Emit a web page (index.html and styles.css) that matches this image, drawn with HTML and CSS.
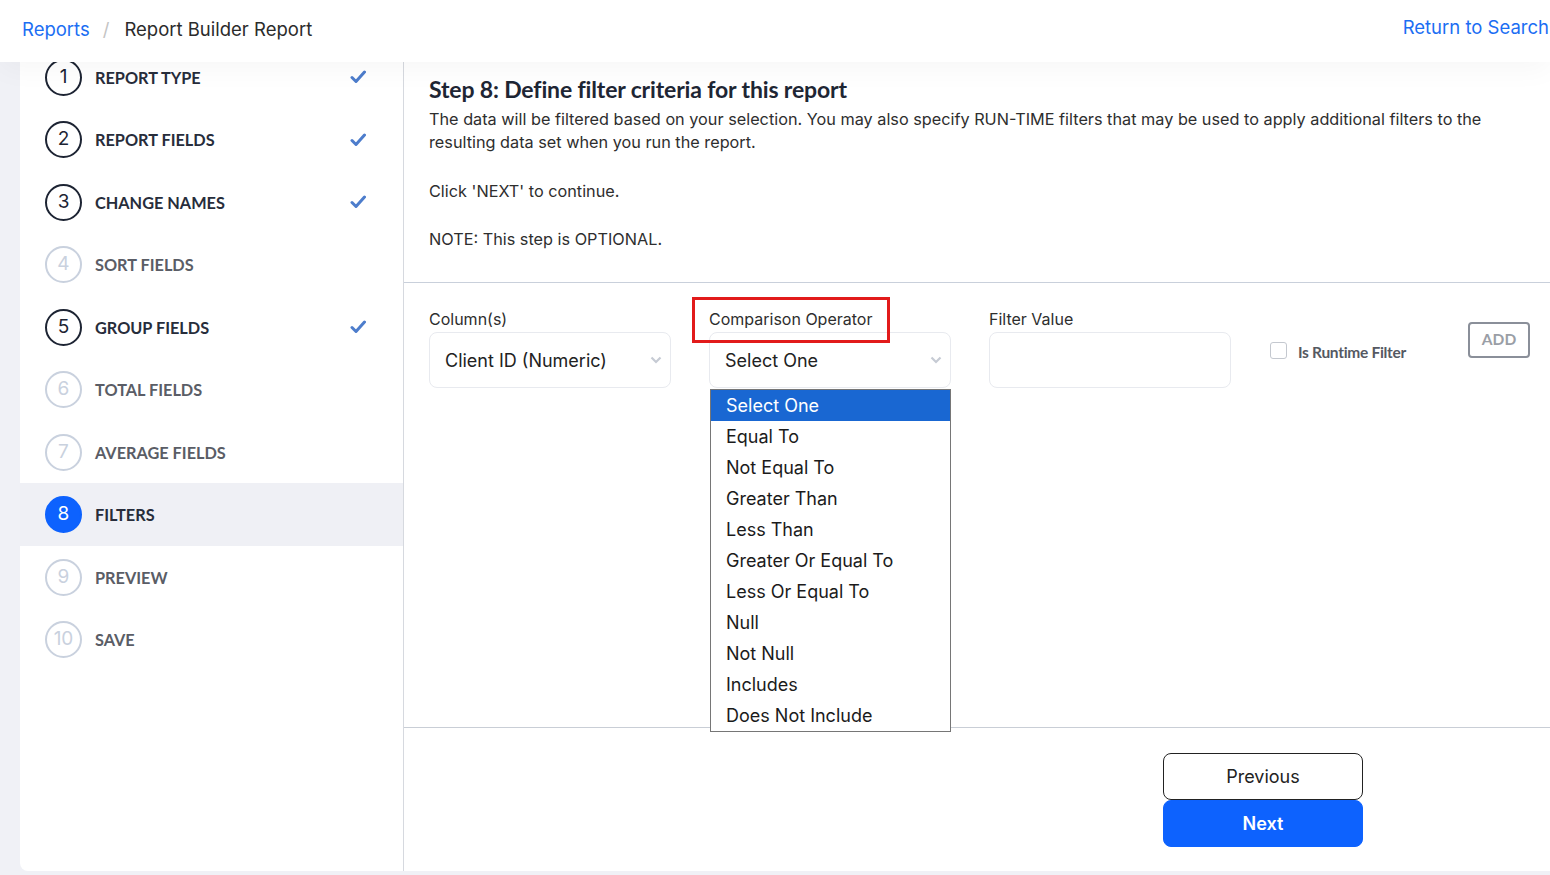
FILE: index.html
```html
<!DOCTYPE html>
<html lang="en">
<head>
  <meta charset="UTF-8" />
  <meta name="viewport" content="width=device-width, initial-scale=1.0"/>
  <title>Report Builder Report</title>
  <link rel="stylesheet" href="styles.css">
</head>
<body>
  <header class="topbar">
    <nav class="breadcrumb">
      <a href="#" class="crumb-link">Reports</a>
      <span class="crumb-sep">/</span>
      <span class="crumb-current">Report Builder Report</span>
    </nav>
    <a href="#" class="return-link">Return to Search</a>
  </header>

  <div class="layout">
    <div class="card">
      <aside class="steps">
        <ul class="step-list">
          <li class="step done"><span class="step-num">1</span><span class="step-label">Report Type</span><svg class="check" viewBox="0 0 16 14"><path d="M2 7.5l4 4L14.5 2"/></svg></li>
          <li class="step done"><span class="step-num">2</span><span class="step-label">Report Fields</span><svg class="check" viewBox="0 0 16 14"><path d="M2 7.5l4 4L14.5 2"/></svg></li>
          <li class="step done"><span class="step-num">3</span><span class="step-label">Change Names</span><svg class="check" viewBox="0 0 16 14"><path d="M2 7.5l4 4L14.5 2"/></svg></li>
          <li class="step"><span class="step-num">4</span><span class="step-label">Sort Fields</span></li>
          <li class="step done"><span class="step-num">5</span><span class="step-label">Group Fields</span><svg class="check" viewBox="0 0 16 14"><path d="M2 7.5l4 4L14.5 2"/></svg></li>
          <li class="step"><span class="step-num">6</span><span class="step-label">Total Fields</span></li>
          <li class="step"><span class="step-num">7</span><span class="step-label">Average Fields</span></li>
          <li class="step active"><span class="step-num">8</span><span class="step-label">Filters</span></li>
          <li class="step"><span class="step-num">9</span><span class="step-label">Preview</span></li>
          <li class="step"><span class="step-num">10</span><span class="step-label">Save</span></li>
        </ul>
      </aside>

      <main class="content">
        <section class="intro">
          <h1 class="step-title">Step 8: Define filter criteria for this report</h1>
          <p>The data will be filtered based on your selection. You may also specify RUN-TIME filters that may be used to apply additional filters to the resulting data set when you run the report.</p>
          <p>Click 'NEXT' to continue.</p>
          <p>NOTE: This step is OPTIONAL.</p>
        </section>

        <section class="filters">
          <div class="filter-row">
            <div class="field">
              <label class="field-label">Column(s)</label>
              <div class="select-box">
                <span>Client ID (Numeric)</span>
                <svg class="chevron" viewBox="0 0 12 8"><path d="M1.5 1.5l4.5 4.5 4.5-4.5"/></svg>
              </div>
            </div>

            <div class="field operator">
              <label class="field-label"><span class="highlight">Comparison Operator</span></label>
              <div class="select-box">
                <span>Select One</span>
                <svg class="chevron" viewBox="0 0 12 8"><path d="M1.5 1.5l4.5 4.5 4.5-4.5"/></svg>
              </div>
              <ul class="options">
                <li class="selected">Select One</li>
                <li>Equal To</li>
                <li>Not Equal To</li>
                <li>Greater Than</li>
                <li>Less Than</li>
                <li>Greater Or Equal To</li>
                <li>Less Or Equal To</li>
                <li>Null</li>
                <li>Not Null</li>
                <li>Includes</li>
                <li>Does Not Include</li>
              </ul>
            </div>

            <div class="field">
              <label class="field-label">Filter Value</label>
              <div class="text-box"></div>
            </div>

            <label class="runtime">
              <span class="checkbox"></span>
              <span>Is Runtime Filter</span>
            </label>

            <button type="button" class="add-btn">ADD</button>
          </div>
        </section>

        <footer class="actions">
          <div class="btn-stack">
            <button type="button" class="btn btn-prev">Previous</button>
            <button type="button" class="btn btn-next">Next</button>
          </div>
        </footer>
      </main>
    </div>
  </div>
</body>
</html>
```

FILE: styles.css
```css
* {
  box-sizing: border-box;
}

body {
  margin: 0;
  font-family: Inter, "Noto Sans", sans-serif;
  color: #222;
  background: #f0f1f6;
  height: 875px;
  overflow: hidden;
}

a {
  text-decoration: none;
}

.topbar {
  position: relative;
  z-index: 2;
  height: 62px;
  display: flex;
  justify-content: space-between;
  align-items: center;
  padding: 0 1px 4px 22px;
  background: #fff;
  box-shadow: 0 8px 28px rgba(0, 0, 0, 0.035);
  font-size: 18.5px;
}

.breadcrumb {
  display: flex;
  align-items: center;
}

.crumb-link,
.return-link {
  color: #1b6ef3;
}

.return-link {
  margin-top: -4px;
}

.crumb-sep {
  color: #c4c4c4;
  padding: 0 15px 0 13px;
}

.crumb-current {
  color: #2b2b2b;
}

.layout {
  display: flex;
  height: 813px;
  padding: 0 0 4px 20px;
}

.card {
  flex: 1;
  display: flex;
  background: #fff;
  border-radius: 0 0 0 8px;
  overflow: hidden;
}

/* steps sidebar */
.steps {
  width: 384px;
  flex-shrink: 0;
  border-right: 1px solid #d6d9df;
}

.step-list {
  list-style: none;
  margin: -16.25px 0 0;
  padding: 0;
}

.step {
  height: 62.5px;
  display: flex;
  align-items: center;
  padding: 0 37px 0 25px;
}

.step-num {
  width: 37px;
  height: 37px;
  flex-shrink: 0;
  border: 2px solid #c9d1de;
  border-radius: 50%;
  display: flex;
  align-items: center;
  justify-content: center;
  font-size: 19px;
  color: #c9d1de;
  padding-bottom: 2px;
}

.step-label {
  flex: 1;
  margin-left: 13px;
  font-family: Lato, sans-serif;
  font-weight: 700;
  font-size: 16.3px;
  text-transform: uppercase;
  color: #5a5d66;
}

.step.done .step-num {
  border-color: #1d2433;
  color: #1d2433;
}

.step.done .step-label,
.step.active .step-label {
  color: #272d3b;
}

.step.active {
  background: #eff0f5;
}

.step.active .step-num {
  background: #0d62fe;
  border-color: #0d62fe;
  color: #fff;
}

.check {
  width: 16px;
  height: 14px;
  fill: none;
  stroke: #4d7dcc;
  stroke-width: 3;
  stroke-linecap: round;
  stroke-linejoin: round;
}

/* main content */
.content {
  flex: 1;
  display: flex;
  flex-direction: column;
}

.intro {
  padding: 13px 25px 31px;
  border-bottom: 1px solid #c9d0db;
  font-size: 16.25px;
  line-height: 23px;
  color: #2e2e2e;
}

.step-title {
  margin: 0 0 5px;
  font-family: Lato, sans-serif;
  font-weight: 700;
  font-size: 23px;
  line-height: 28px;
  letter-spacing: -0.15px;
  color: #1e2634;
}

.intro p {
  margin: 0 0 26px;
}

.intro p + p {
  margin-bottom: 25px;
}

.intro p:last-child {
  margin-bottom: 0;
}

.filters {
  flex: 1;
  border-bottom: 1px solid #c9ced6;
  padding: 25px 20px 0 25px;
}

.filter-row {
  display: flex;
  align-items: flex-start;
  gap: 38px;
}

.field {
  position: relative;
  width: 242px;
  display: flex;
  flex-direction: column;
}

.field-label {
  font-size: 16px;
  line-height: 22px;
  margin-bottom: 2px;
  color: #2e2e2e;
}

.highlight {
  position: relative;
}

.highlight::after {
  content: "";
  position: absolute;
  top: -12px;
  bottom: -14px;
  left: -17px;
  right: -18px;
  border: 3px solid #e21b1b;
}

.select-box,
.text-box {
  height: 56px;
  border: 1px solid #e8eaef;
  border-radius: 8px;
  background: #fff;
}

.select-box {
  display: flex;
  align-items: center;
  justify-content: space-between;
  padding: 0 8px 0 15px;
  font-size: 18px;
  color: #222;
}

.chevron {
  width: 12px;
  height: 8px;
  fill: none;
  stroke: #c6cbd4;
  stroke-width: 2.2;
}

.options {
  position: absolute;
  top: 81px;
  left: 1px;
  width: 241px;
  list-style: none;
  margin: 0;
  padding: 0;
  background: #fff;
  border: 1px solid #767676;
  font-size: 18px;
  line-height: 31px;
  color: #1b1b1b;
  z-index: 3;
}

.options li {
  padding-left: 15px;
}

.options li.selected {
  background: #1967d2;
  color: #fff;
}

.runtime {
  display: flex;
  align-items: center;
  margin-top: 35px;
  margin-left: 1px;
  font-family: Lato, sans-serif;
  font-weight: 700;
  font-size: 15.5px;
  letter-spacing: -0.3px;
  color: #555962;
}

.checkbox {
  width: 17px;
  height: 17px;
  border: 1px solid #c4c8cf;
  border-radius: 3px;
  margin-right: 11px;
  margin-top: -4px;
}

.add-btn {
  margin-left: auto;
  margin-top: 14px;
  width: 62px;
  height: 36px;
  border: 2px solid #8a8f99;
  border-radius: 4px;
  background: #fff;
  font-family: Lato, sans-serif;
  font-weight: 700;
  font-size: 15.5px;
  color: #9a9ea6;
  padding: 0 0 3px;
}

.actions {
  height: 143px;
  display: flex;
  justify-content: flex-end;
  padding: 25px 187px 0 0;
}

.btn-stack {
  display: flex;
  flex-direction: column;
  width: 200px;
}

.btn {
  height: 47px;
  border-radius: 8px;
  font-family: Inter, sans-serif;
  font-size: 18px;
  cursor: pointer;
}

.btn-prev {
  background: #fff;
  border: 1px solid #222;
  color: #222;
}

.btn-next {
  background: #0d62fe;
  border: 1px solid #0d62fe;
  color: #fff;
  font-weight: 600;
}
```
